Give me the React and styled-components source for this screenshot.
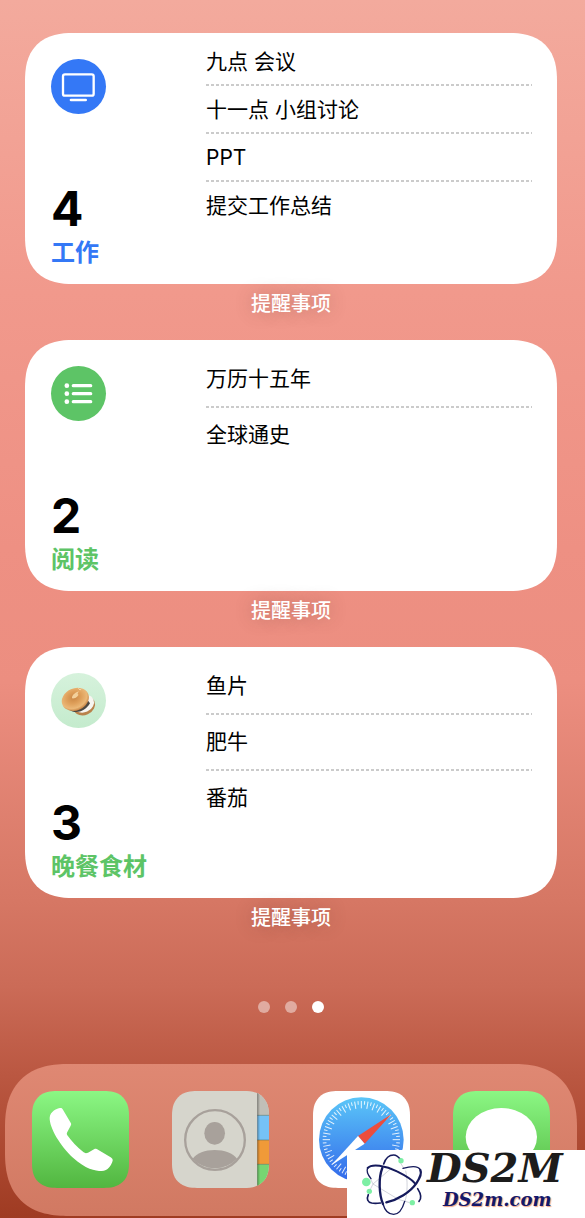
import React from "react";
import styled, { createGlobalStyle, css } from "styled-components";

const GlobalStyle = createGlobalStyle`
  *, *::before, *::after { box-sizing: border-box; }
  body {
    margin: 0;
    font-family: Inter, "Noto Sans CJK SC", sans-serif;
    color: #000;
  }
  button { font: inherit; border: 0; padding: 0; margin: 0; background: none; cursor: pointer; }
`;

const squircle = (plain, smooth) => css`
  border-radius: ${plain}px;
  @supports (corner-shape: squircle) {
    border-radius: ${smooth}px;
    corner-shape: superellipse(1.3);
  }
`;

const Page = styled.div`
  position: relative;
  min-height: 100vh;
  display: flex;
  flex-direction: column;
  padding-top: 33px;
  overflow: hidden;
  background: linear-gradient(
    to bottom,
    #f3aa9d 0%,
    #f1998c 24%,
    #ee9083 45%,
    #ec8e80 56%,
    #d67764 74%,
    #cb6b57 81%,
    #bb5842 88%,
    #9f3b22 100%
  );
`;

const Widgets = styled.main`
  padding: 0 28px 0 25px;
`;

const Card = styled.article`
  display: flex;
  height: 251px;
  padding: 0 25px 0 26px;
  background: #fff;
  ${squircle(42, 48)}
`;

const Summary = styled.header`
  display: flex;
  flex-direction: column;
  width: 155px;
  flex: none;
  padding: 26px 0 15px;
`;

const Badge = styled.span`
  width: 55px;
  height: 55px;
  border-radius: 50%;
  background: ${(p) => p.$fill};
  svg { display: block; width: 100%; height: 100%; }
`;

const Count = styled.strong`
  margin-top: auto;
  font-size: 48px;
  line-height: 56px;
  font-weight: 700;
`;

const ListName = styled.h2`
  margin: 0;
  font-size: 24px;
  line-height: 32px;
  font-weight: 700;
  color: ${(p) => p.$color};
`;

const Items = styled.ul`
  flex: 1;
  margin: 0;
  padding: ${(p) => (p.$dense ? 5 : 12)}px 0 0;
  list-style: none;
`;

const Item = styled.li`
  height: ${(p) => (p.$dense ? 48 : 56)}px;
  display: flex;
  align-items: center;
  font-size: 21px;
  line-height: 32px;
  padding-bottom: ${(p) => (p.$dense ? 0 : 2)}px;
  &:not(:last-child) {
    background: repeating-linear-gradient(to right, #cbcbcb 0 3px, transparent 3px 5px)
      bottom / 100% 2px no-repeat;
  }
`;

const Caption = styled.p`
  margin: 0;
  padding-bottom: 16px;
  text-align: center;
  font-size: 20px;
  line-height: 40px;
  font-weight: 500;
  color: #fff;
  text-shadow: 0 0 18px rgba(90, 50, 40, 0.3);
`;

const Pager = styled.nav`
  display: flex;
  justify-content: center;
  gap: 15px;
  margin: 47px 28px 51px 25px;
`;

const Dot = styled.button`
  width: 12px;
  height: 12px;
  && { background: ${(p) => (p.$active ? "#fff" : "rgba(255,255,255,0.45)")}; }
  border-radius: 50%;
`;

const Dock = styled.footer`
  display: flex;
  justify-content: space-between;
  height: 152px;
  margin: 0 8px 2px 5px;
  padding: 27px 27px 0;
  background: linear-gradient(to bottom, #df8873, #d17962);
  ${squircle(54, 64)}
`;

const AppIcon = styled.button`
  width: 97px;
  height: 97px;
  overflow: hidden;
  ${squircle(22, 25)}
  svg { display: block; width: 100%; height: 100%; }
`;

const Watermark = styled.aside`
  position: absolute;
  right: 0;
  bottom: 0;
  width: 238px;
  height: 68px;
  display: flex;
  padding-left: 14px;
  background: #fff;
  svg { width: 64px; height: 68px; flex: none; }
`;

const Brand = styled.div`
  display: flex;
  flex-direction: column;
  padding-left: 2px;
  font-family: "DejaVu Serif", serif;
  font-weight: 700;
  font-style: italic;
`;

const BrandName = styled.span`
  font-size: 40px;
  line-height: 36px;
  color: #1c1c1c;
`;

const BrandSite = styled.span`
  padding-left: 16px;
  font-size: 18px;
  line-height: 28px;
  color: #14186b;
  text-shadow: 1px 1px 1px #f0a080;
`;

const ScreenGlyph = () => (
  <svg viewBox="0 0 165 165" aria-hidden="true">
    <rect x="36" y="46" width="92" height="64" rx="6" fill="none" stroke="#fff" strokeWidth="7" />
    <path d="M60 123H104" stroke="#fff" strokeWidth="8" strokeLinecap="round" />
  </svg>
);

const ListGlyph = () => (
  <svg viewBox="0 0 165 165" aria-hidden="true">
    {[59, 83, 107].map((y) => (
      <g key={y} fill="#fff">
        <circle cx="47.5" cy={y} r="7" />
        <rect x="62" y={y - 5} width="62" height="10" rx="5" />
      </g>
    ))}
  </svg>
);

const BagelGlyph = () => (
  <svg viewBox="0 0 165 165" aria-hidden="true">
    <defs>
      <radialGradient id="crust" cx="0.48" cy="0.4" r="0.6">
        <stop offset="0" stopColor="#c98644" />
        <stop offset="0.45" stopColor="#dfa05b" />
        <stop offset="0.8" stopColor="#ebb878" />
        <stop offset="1" stopColor="#c68343" />
      </radialGradient>
    </defs>
    <ellipse cx="99" cy="98" rx="34" ry="28" transform="rotate(-24 99 98)" fill="#b9824b" />
    <ellipse cx="98" cy="92" rx="32" ry="26" transform="rotate(-24 98 92)" fill="#f7f5f1" />
    <path d="M55 110C72 124 102 117 117 91L112 84L50 102Z" fill="#4d4842" />
    <ellipse cx="73" cy="79" rx="42" ry="33" transform="rotate(-24 73 79)" fill="url(#crust)" />
    <path d="M63 76C62 66 74 58 84 55C80 60 78 64 83 65C77 75 69 77 63 76Z" fill="#f3d09b" />
    <path d="M82 46L87 51L91 48" fill="none" stroke="#f5d8ad" strokeWidth="3" />
  </svg>
);

const GreenFill = ({ id }) => (
  <defs>
    <linearGradient id={id} x1="0" y1="0" x2="0" y2="1">
      <stop offset="0" stopColor="#8bf784" />
      <stop offset="1" stopColor="#52b640" />
    </linearGradient>
  </defs>
);

const PhoneArt = () => (
  <svg viewBox="0 0 291 291" aria-hidden="true">
    <GreenFill id="phoneFill" />
    <rect width="291" height="291" fill="url(#phoneFill)" />
    <path
      fill="#fff"
      d="M84 51C76 51 54 62 53 80C52 110 85 165 123 200C160 234 190 240 209 240C228 240 238 222 242 209C243 205 240 202 236 199L198 176C194 173 190 173 186 175L168 185C163 187 159 187 155 184C135 168 118 150 106 133C104 129 104 126 106 123L116 104C118 100 118 98 116 95L92 55C90 51 87 50 84 51Z"
    />
  </svg>
);

const ContactsArt = () => (
  <svg viewBox="0 0 291 291" aria-hidden="true">
    <defs>
      <linearGradient id="tabEdge">
        <stop offset="0" stopColor="#000" stopOpacity="0.35" />
        <stop offset="1" stopColor="#000" stopOpacity="0" />
      </linearGradient>
    </defs>
    <rect width="291" height="291" fill="#d6d5cc" />
    <rect x="256" width="35" height="73" fill="#c1bfb7" />
    <rect x="256" y="73" width="35" height="74" fill="#75c2f6" />
    <rect x="256" y="147" width="35" height="73" fill="#f09a38" />
    <rect x="256" y="220" width="35" height="71" fill="#77d572" />
    <path d="M256 73H291M256 147H291M256 220H291" stroke="#4c6a5c" strokeOpacity="0.5" strokeWidth="3" />
    <rect x="255" width="9" height="291" fill="url(#tabEdge)" />
    <circle cx="129" cy="147" r="89.500" fill="none" stroke="#a8a19b" strokeWidth="7" />
    <ellipse cx="128" cy="127" rx="31" ry="34" fill="#a8a19b" />
    <path d="M62 203C74 186 99 177 128 177C157 177 183 186 195 203A91 91 0 0 1 62 203Z" fill="#a8a19b" />
  </svg>
);

const ticks = Array.from({ length: 72 }, (_, i) => i);

const SafariArt = () => (
  <svg viewBox="0 0 291 291" aria-hidden="true">
    <defs>
      <linearGradient id="dial" x1="0" y1="0" x2="0" y2="1">
        <stop offset="0" stopColor="#5bc6f8" />
        <stop offset="1" stopColor="#3268ea" />
      </linearGradient>
    </defs>
    <rect width="291" height="291" fill="#fff" />
    <circle cx="145" cy="146" r="127" fill="url(#dial)" />
    {ticks.map((i) => (
      <path
        key={i}
        d={i % 2 ? "M145 30V41" : "M145 30V52"}
        stroke="#fff"
        strokeOpacity="0.85"
        strokeWidth="3"
        transform={`rotate(${i * 5} 145 146)`}
      />
    ))}
    <path d="M236 69L135 135L155 158Z" fill="#eb4d3d" />
    <path d="M55 223L135 135L155 158Z" fill="#fff" />
  </svg>
);

const MessagesArt = () => (
  <svg viewBox="0 0 291 291" aria-hidden="true">
    <GreenFill id="messagesFill" />
    <rect width="291" height="291" fill="url(#messagesFill)" />
    <ellipse cx="145" cy="138" rx="107" ry="87" fill="#fff" />
    <path d="M88 205C88 222 76 234 66 239C88 240 108 232 120 218Z" fill="#fff" />
  </svg>
);

const AtomLogo = () => (
  <svg viewBox="48 30 192 204" role="img" aria-label="Atom">
    <g fill="none" stroke="#b9bcc8" strokeWidth="2">
      <path d="M182 92C188 120 188 160 180 184M84 132L140 84M84 132L74 112M84 132L160 178L194 188M84 132L72 156M166 68L176 84" />
    </g>
    <g fill="none" stroke="#151a5c" strokeLinecap="round">
      <path strokeWidth="5" d="M116 72C122 54 134 45 146 45C154 45 160 50 166 58" />
      <path strokeWidth="4" d="M114 192C120 214 134 223 146 223C160 223 172 208 179 184" />
      <path strokeWidth="7" d="M112 84C100 114 102 164 114 192" />
      <path strokeWidth="6" d="M68 84C80 70 122 76 156 94C184 108 204 122 210 130" />
      <path strokeWidth="4" d="M68 84C63 94 70 106 78 116" />
      <path strokeWidth="5" d="M70 164C64 178 68 186 80 189C90 191 98 190 106 189" />
      <path strokeWidth="7" d="M124 187C158 180 196 156 214 130C226 112 230 98 226 90" />
      <path strokeWidth="4" d="M226 90C220 76 200 78 174 85" />
      <path strokeWidth="5" d="M218 146C228 162 230 176 222 184" />
    </g>
    <g fill="#7defa4">
      <circle cx="64" cy="126" r="13" />
      <circle cx="168" cy="62" r="8" />
      <circle cx="73" cy="154" r="8" />
      <circle cx="202" cy="188" r="8" />
    </g>
  </svg>
);

const lists = [
  {
    name: "工作",
    color: "#3478f6",
    fill: "#3478f6",
    Glyph: ScreenGlyph,
    items: ["九点 会议", "十一点 小组讨论", "PPT", "提交工作总结"],
  },
  {
    name: "阅读",
    color: "#5dc466",
    fill: "#5dc466",
    Glyph: ListGlyph,
    items: ["万历十五年", "全球通史"],
  },
  {
    name: "晚餐食材",
    color: "#5dc466",
    fill: "linear-gradient(to bottom, #d6f2dc, #c4ebcd)",
    Glyph: BagelGlyph,
    items: ["鱼片", "肥牛", "番茄"],
  },
];

const apps = [
  ["电话", PhoneArt],
  ["通讯录", ContactsArt],
  ["Safari", SafariArt],
  ["信息", MessagesArt],
];

function ReminderWidget({ list }) {
  const dense = list.items.length > 3;
  return (
    <section>
      <Card>
        <Summary>
          <Badge $fill={list.fill}>
            <list.Glyph />
          </Badge>
          <Count>{list.items.length}</Count>
          <ListName $color={list.color}>{list.name}</ListName>
        </Summary>
        <Items $dense={dense}>
          {list.items.map((item) => (
            <Item key={item} $dense={dense}>
              {item}
            </Item>
          ))}
        </Items>
      </Card>
      <Caption>提醒事项</Caption>
    </section>
  );
}

export default function App() {
  return (
    <Page>
      <GlobalStyle />
      <Widgets>
        {lists.map((list) => (
          <ReminderWidget key={list.name} list={list} />
        ))}
      </Widgets>
      <Pager>
        {[1, 2, 3].map((n) => (
          <Dot key={n} type="button" $active={n === 3} aria-label={`第 ${n} 页`} />
        ))}
      </Pager>
      <Dock>
        {apps.map(([label, Art]) => (
          <AppIcon key={label} type="button" aria-label={label}>
            <Art />
          </AppIcon>
        ))}
      </Dock>
      <Watermark>
        <AtomLogo />
        <Brand>
          <BrandName>DS2M</BrandName>
          <BrandSite>DS2m.com</BrandSite>
        </Brand>
      </Watermark>
    </Page>
  );
}
